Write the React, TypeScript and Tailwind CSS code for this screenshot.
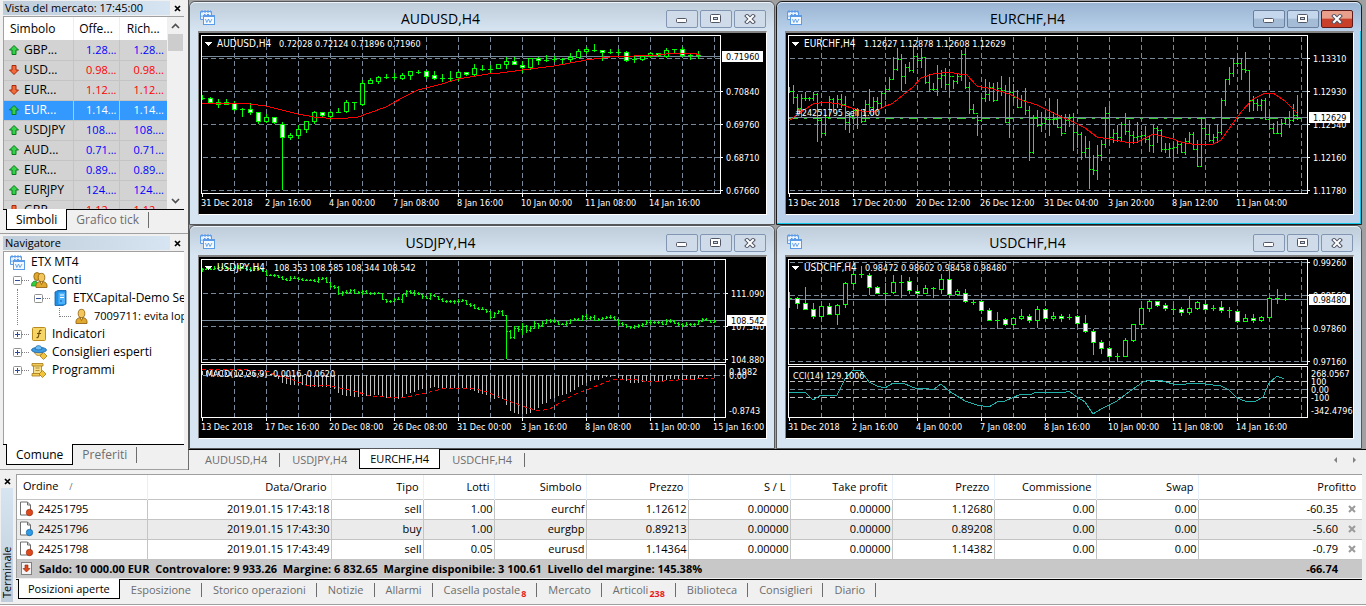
import type { ReactNode } from 'react';

type Candle = [high: number, top: number, bottom: number, low: number, kind: 'f' | 'h' | 'd'];
type Bar = [high: number, low: number, close: number];

const GRID = '#778899';
const LIME = '#00ff00';
const PLOT_BOTTOM = 160;

// candles are [high, body top, body bottom, low, filled / hollow / doji]
const audusd: Candle[] = [
  [95, 98, 99, 100, 'd'], [97, 98, 103, 104, 'f'], [99, 102, 105, 108, 'f'], [99, 102, 105, 105, 'h'],
  [101, 103, 110, 111, 'f'], [108, 109, 110, 117, 'd'], [103, 109, 113, 115, 'f'], [112, 112, 122, 124, 'f'],
  [114, 117, 122, 123, 'h'], [117, 117, 123, 124, 'f'], [122, 124, 138, 190, 'f'], [133, 135, 138, 140, 'h'],
  [125, 129, 136, 139, 'h'], [121, 121, 130, 133, 'h'], [111, 112, 122, 124, 'h'], [112, 112, 116, 118, 'f'],
  [111, 112, 117, 120, 'h'], [108, 112, 113, 113, 'd'], [100, 102, 112, 113, 'h'], [102, 102, 103, 110, 'd'],
  [80, 83, 105, 106, 'h'], [78, 80, 84, 84, 'h'], [76, 77, 82, 84, 'h'], [74, 77, 78, 79, 'd'],
  [73, 77, 78, 80, 'd'], [73, 75, 79, 80, 'h'], [71, 71, 76, 80, 'h'], [70, 72, 73, 74, 'd'],
  [70, 71, 77, 79, 'f'], [71, 75, 79, 80, 'f'], [74, 78, 79, 82, 'd'], [71, 78, 79, 81, 'd'],
  [71, 72, 78, 81, 'h'], [72, 72, 75, 76, 'f'], [64, 68, 75, 76, 'h'], [65, 69, 70, 71, 'd'],
  [65, 69, 70, 73, 'd'], [64, 64, 69, 69, 'h'], [57, 61, 65, 69, 'h'], [57, 61, 65, 65, 'f'],
  [61, 65, 68, 73, 'f'], [58, 58, 68, 70, 'h'], [57, 58, 61, 65, 'f'], [55, 60, 61, 62, 'd'],
  [56, 59, 60, 62, 'd'], [58, 59, 60, 64, 'd'], [53, 57, 60, 62, 'h'], [49, 51, 58, 58, 'h'],
  [47, 49, 52, 54, 'h'], [44, 50, 51, 52, 'd'], [50, 50, 53, 61, 'f'], [49, 52, 53, 54, 'd'],
  [49, 52, 53, 55, 'd'], [51, 52, 61, 62, 'f'], [56, 59, 60, 63, 'd'], [55, 56, 60, 61, 'h'],
  [52, 53, 57, 58, 'h'], [53, 53, 56, 57, 'f'], [48, 50, 57, 58, 'h'], [49, 49, 50, 53, 'd'],
  [47, 49, 56, 57, 'f'], [53, 55, 56, 60, 'd'], [51, 55, 56, 59, 'd'],
];

const usdchf: Candle[] = [
  [35, 41, 42, 51, 'd'], [40, 41, 47, 52, 'f'], [30, 46, 53, 53, 'f'], [46, 52, 60, 62, 'f'],
  [47, 49, 60, 62, 'h'], [46, 49, 58, 58, 'f'], [47, 48, 58, 68, 'h'], [25, 26, 48, 51, 'h'],
  [16, 17, 27, 28, 'h'], [9, 17, 18, 21, 'd'], [16, 18, 31, 38, 'f'], [29, 30, 37, 37, 'f'],
  [26, 36, 37, 44, 'd'], [18, 25, 36, 37, 'h'], [18, 25, 26, 41, 'd'], [20, 24, 34, 37, 'f'],
  [30, 34, 37, 41, 'f'], [28, 31, 37, 37, 'h'], [30, 31, 32, 41, 'd'], [17, 22, 33, 37, 'h'],
  [13, 22, 38, 41, 'f'], [32, 34, 38, 39, 'h'], [32, 36, 45, 46, 'f'], [43, 45, 46, 48, 'd'],
  [42, 44, 54, 54, 'f'], [51, 53, 64, 64, 'f'], [55, 63, 64, 72, 'd'], [61, 62, 68, 69, 'f'],
  [60, 61, 68, 71, 'h'], [52, 59, 62, 63, 'h'], [57, 59, 64, 66, 'f'], [49, 52, 64, 71, 'h'],
  [51, 52, 62, 63, 'f'], [55, 59, 62, 64, 'h'], [57, 59, 62, 65, 'f'], [57, 60, 61, 63, 'd'],
  [58, 59, 67, 70, 'f'], [58, 66, 75, 76, 'f'], [72, 74, 86, 98, 'f'], [83, 85, 92, 97, 'f'],
  [90, 91, 100, 101, 'f'], [96, 99, 100, 105, 'd'], [81, 83, 100, 100, 'h'], [67, 67, 84, 85, 'h'],
  [49, 51, 68, 70, 'h'], [42, 44, 52, 55, 'h'], [44, 44, 49, 50, 'f'], [46, 48, 52, 54, 'f'],
  [47, 52, 53, 58, 'd'], [50, 52, 56, 59, 'f'], [39, 51, 56, 58, 'h'], [44, 45, 52, 53, 'h'],
  [43, 47, 53, 53, 'f'], [48, 51, 52, 54, 'd'], [44, 50, 54, 56, 'f'], [50, 53, 54, 61, 'd'],
  [53, 54, 65, 66, 'f'], [57, 61, 65, 65, 'h'], [57, 61, 64, 66, 'f'], [59, 60, 64, 65, 'h'],
  [40, 41, 61, 63, 'h'], [32, 41, 42, 47, 'd'], [36, 42, 43, 44, 'd'],
];

// bars are [high, low, close], in thirds of a pixel
const eurchf: Bar[] = [
  [262, 280, 272], [255, 312, 290], [283, 345, 325], [283, 350, 295], [277, 303, 294], [290, 302, 293],
  [275, 302, 281], [280, 427, 361], [352, 412, 400], [345, 407, 350], [287, 352, 297], [293, 335, 308],
  [285, 325, 296], [283, 325, 312], [288, 389, 367], [335, 398, 349], [325, 373, 330], [325, 388, 330],
  [327, 370, 364], [300, 367, 313], [267, 343, 320], [290, 345, 303], [291, 335, 308], [277, 325, 279],
  [265, 300, 268], [232, 272, 236], [171, 238, 208], [145, 212, 178], [162, 273, 227], [192, 253, 202],
  [187, 215, 211], [132, 218, 168], [165, 205, 181], [145, 205, 172], [172, 252, 247], [222, 277, 266],
  [250, 273, 268], [195, 288, 235], [210, 265, 226], [205, 270, 253], [217, 290, 228], [240, 268, 244],
  [222, 252, 229], [150, 242, 163], [145, 267, 262], [245, 342, 326], [313, 343, 338], [345, 408, 360],
  [290, 367, 294], [238, 305, 283], [247, 302, 260], [250, 305, 300], [247, 303, 265], [228, 288, 270],
  [255, 370, 367], [230, 415, 275], [252, 308, 290], [270, 325, 320], [285, 325, 300], [265, 345, 330],
  [318, 484, 455], [345, 462, 350], [330, 382, 374], [337, 397, 368], [342, 375, 356], [293, 408, 356],
  [335, 375, 356], [297, 385, 380], [345, 408, 398], [342, 395, 360], [343, 380, 350], [340, 453, 395],
  [372, 443, 402], [397, 480, 456], [408, 475, 445], [422, 567, 507], [465, 525, 510], [435, 540, 466],
  [420, 482, 433], [320, 443, 340], [318, 430, 412], [388, 430, 400], [375, 425, 410], [367, 425, 373],
  [338, 405, 394], [360, 445, 405], [392, 433, 411], [365, 428, 408], [393, 425, 405], [377, 430, 417],
  [407, 457, 436], [375, 460, 385], [377, 430, 390], [387, 457, 447], [430, 460, 448], [430, 472, 445],
  [430, 472, 440], [420, 463, 433], [428, 460, 456], [415, 465, 422], [395, 433, 403], [395, 450, 447],
  [420, 500, 497], [352, 498, 383], [367, 420, 402], [375, 425, 420], [402, 430, 410], [372, 430, 396],
  [293, 405, 301], [237, 318, 238], [202, 255, 218], [178, 230, 188], [172, 202, 190], [175, 240, 206],
  [155, 220, 210], [210, 335, 300], [288, 333, 310], [297, 333, 315], [297, 333, 300], [295, 360, 356],
  [343, 387, 383], [370, 403, 398], [363, 400, 398], [357, 410, 370], [352, 375, 355], [333, 385, 360],
  [312, 367, 345], [285, 360, 353],
];

const usdjpy: Bar[] = [
  [137, 150, 141], [136, 142, 139], [137, 143, 140], [132, 142, 138], [130, 142, 134], [133, 140, 137],
  [133, 142, 138], [134, 143, 139], [132, 142, 136], [128, 142, 137], [133, 142, 138], [135, 145, 140],
  [135, 147, 143], [133, 143, 137], [136, 145, 142], [138, 150, 146], [145, 163, 160], [155, 163, 159],
  [156, 165, 160], [160, 168, 164], [163, 175, 171], [168, 178, 175], [163, 175, 168], [163, 172, 168],
  [165, 175, 170], [168, 178, 174], [170, 178, 175], [170, 178, 174], [172, 180, 177], [165, 183, 170],
  [165, 173, 169], [165, 183, 180], [180, 197, 193], [190, 200, 196], [193, 218, 212], [207, 223, 211],
  [205, 215, 209], [202, 213, 205], [200, 217, 212], [207, 217, 210], [203, 220, 206], [203, 217, 212],
  [210, 220, 214], [210, 220, 214], [210, 217, 214], [212, 233, 231], [230, 242, 238], [235, 243, 236],
  [228, 237, 231], [225, 235, 231], [215, 242, 217], [203, 225, 208], [203, 215, 209], [205, 222, 213],
  [210, 220, 217], [217, 230, 223], [222, 232, 228], [213, 235, 218], [215, 225, 222], [222, 235, 230],
  [228, 240, 236], [235, 243, 238], [233, 243, 237], [235, 245, 238], [232, 242, 236], [230, 240, 234],
  [235, 250, 245], [243, 255, 250], [247, 262, 258], [255, 265, 260], [255, 263, 260], [260, 272, 266],
  [268, 292, 285], [270, 285, 273], [263, 275, 266], [263, 283, 280], [280, 412, 328], [325, 352, 346],
  [313, 350, 318], [312, 330, 322], [303, 340, 312], [310, 332, 323], [313, 330, 318], [297, 320, 302],
  [302, 320, 310], [298, 315, 303], [290, 305, 295], [292, 302, 297], [292, 303, 297], [300, 310, 306],
  [303, 310, 307], [298, 312, 302], [290, 305, 294], [288, 297, 292], [288, 297, 293], [280, 297, 283],
  [275, 295, 287], [283, 293, 286], [280, 298, 293], [287, 295, 291], [285, 292, 287], [282, 290, 286],
  [280, 290, 285], [283, 293, 290], [290, 313, 303], [300, 312, 307], [305, 318, 313], [312, 320, 316],
  [308, 320, 312], [305, 318, 310], [303, 315, 307], [295, 310, 299], [295, 310, 300], [297, 305, 301],
  [297, 307, 301], [297, 310, 305], [290, 305, 297], [292, 302, 298], [293, 307, 303], [300, 312, 307],
  [303, 315, 309], [300, 313, 305], [303, 312, 307], [303, 312, 307], [295, 307, 297], [287, 300, 291],
  [288, 298, 293], [293, 303, 299], [293, 303, 296],
];

const macd = [
  447, 447, 448, 449, 448, 448, 449, 449, 449, 450, 450, 451, 451, 452, 452, 453, 455, 456, 460, 470, 482, 485, 488,
  488, 490, 490, 493, 494, 494, 495, 495, 495, 498, 502, 513, 518, 521, 521, 524, 524, 521, 521, 521, 520, 520, 522,
  527, 528, 531, 531, 529, 517, 513, 510, 503, 501, 503, 498, 496, 497, 499, 499, 501, 499, 499, 498, 500, 503, 507,
  512, 516, 519, 529, 530, 529, 530, 548, 567, 572, 576, 576, 576, 573, 563, 558, 547, 543, 530, 528, 522, 519, 517,
  509, 504, 494, 490, 482, 476, 474, 473, 469, 466, 464, 462, 467, 473, 477, 483, 482, 483, 481, 478, 477, 476, 476,
  476, 473, 472, 472, 474, 475, 474, 474, 474, 470, 466, 463, 463, 462,
];

function Candles({ data, dy = 0 }: { data: Candle[]; dy?: number }) {
  return (
    <g stroke={LIME}>
      {data.map(([high, top, bottom, low, kind], i) => {
        const x = 3.5 + i * 8;
        return (
          <g key={i}>
            <path d={`M${x} ${high + dy}V${low + dy}`} />
            {kind === 'd' ? (
              <path d={`M${i ? x - 2.5 : x} ${top + dy + 0.5}H${x + 2.5}`} />
            ) : (
              <rect x={x - 2} y={top + dy + 0.5} width={4} height={bottom - top - 1} fill={kind === 'f' ? '#fff' : '#000'} />
            )}
          </g>
        );
      })}
    </g>
  );
}

function Bars({ data, dy }: { data: Bar[]; dy: number }) {
  const px = (v: number) => Math.round(v / 3) + dy;
  const d = data.map(([high, low, close], i) => {
    const x = 3.5 + i * 4;
    const open = i ? `M${x - 1.5} ${px(data[i - 1][2]) + 0.5}H${x}` : '';
    return `${open}M${x} ${px(high)}V${px(low)}M${x} ${px(close) + 0.5}H${x + 1.5}`;
  });
  return <path d={d.join('')} stroke={LIME} fill="none" />;
}

type ChartProps = {
  symbol: string;
  values: string;
  valuesX: number;
  right?: number;
  split?: [number, number];
  grid: number[];
  axis: [number, string][];
  price: [number, string];
  subAxis?: [number, string][];
  dates: string[];
  overlay?: ReactNode;
  children: ReactNode;
};

function Chart({ symbol, values, valuesX, right = 521, split, grid, axis, price, subAxis = [], dates, overlay, children }: ChartProps) {
  const columns = Array.from({ length: 16 }, (_, i) => 35.5 + i * 32).filter((x) => x < right);
  return (
    <svg
      className="block h-[181px] w-full bg-black font-['DejaVu_Sans_Condensed','DejaVu_Sans',sans-serif] text-[9px]"
      shapeRendering="crispEdges"
    >
      <g stroke={GRID} strokeDasharray="5 3" fill="none">
        {columns.map((x) => (
          <path key={x} d={`M${x} 4V${PLOT_BOTTOM}`} />
        ))}
        {grid.map((y) => (
          <path key={y} d={`M4 ${y + 0.5}H${right}`} />
        ))}
      </g>
      <path d={`M3 ${price[0] + 0.5}H${right}`} stroke={GRID} />
      {children}
      <g stroke="#fff" fill="none">
        <path d={`M2.5 2.5H${right + 0.5}V${PLOT_BOTTOM + 0.5}H2.5Z`} />
        {split && <path d={`M3 ${split[0] + 0.5}H${right}M3 ${split[1] + 0.5}H${right}`} />}
        {split && <path d={`M2 ${split[0] + 1.5}H${right + 1}`} stroke="#000" />}
        {axis.map(([y]) => (
          <path key={y} d={`M${right} ${y + 0.5}h3`} />
        ))}
        {dates.map((d, i) => (
          <path key={d} d={`M${3.5 + i * 64} ${PLOT_BOTTOM}v4`} />
        ))}
      </g>
      <g fill="#fff">
        {axis.map(([y, label]) => (
          <text key={label} x={right + 6} y={y + 4}>{label}</text>
        ))}
        {subAxis.map(([y, label]) => (
          <text key={label} x={right + 4} y={y + 4}>{label}</text>
        ))}
        {dates.map((d, i) => (
          <text key={d} x={2 + i * 64} y={173}>{d}</text>
        ))}
        <path d="M6 9h7l-3.500 4z" />
        <text x={18} y={14} className="text-[10px]">{symbol}</text>
        <text x={valuesX} y={14}>{values}</text>
        {overlay}
        <rect x={right + 2} y={price[0] - 5} width={41} height={11} />
        <text x={right + 6} y={price[0] + 4} fill="#000">{price[1]}</text>
      </g>
    </svg>
  );
}

function ChartIcon() {
  return (
    <svg width="15" height="15" viewBox="0 0 15 15" fill="none" stroke="#5b9be8">
      <path d="M.500 9.500v-8h11v4h-8v4z" fill="#eaf3fd" />
      <path d="M1 1.500h10" strokeWidth="2" strokeDasharray="2 1" />
      <path d="M2 7V5.500M4 4.500h1.500M7 4.500h2" />
      <rect x="3.500" y="5.500" width="11" height="9" fill="#f5faff" />
      <path d="M4 6.500h10" />
      <path d="M5.500 9l1.300 3.500L8.500 9l1.500 3.500L12 9" strokeWidth=".9" />
    </svg>
  );
}

function WindowButton({ label, danger, active, children }: { label: string; danger?: boolean; active?: boolean; children: ReactNode }) {
  const look = danger
    ? 'border-[#5c1a1a] bg-gradient-to-b from-[#e8a08c] from-45% to-[#c8402a] to-50%'
    : active
      ? 'border-[#6b7f9c] bg-gradient-to-b from-[#c4d7ec] from-45% to-[#a5bcd6] to-50%'
      : 'border-[#8295b2] bg-[#cfdbe8]';
  return (
    <button aria-label={label} className={`flex h-[18px] w-8 items-center justify-center rounded-xs border ${look}`}>
      {children}
    </button>
  );
}

function ChartWindow({ title, active, children }: { title: string; active?: boolean; children: ReactNode }) {
  return (
    <section
      className={`min-w-0 rounded-t-md border pr-[7px] pb-[9px] pl-2 ${
        active
          ? 'border-[#1c1c1c] bg-[#b9d1ea] shadow-[inset_-1px_-1px_0_#12c8e8]'
          : 'border-[#55575b] bg-[#d7e4f2]'
      }`}
    >
      <header
        className={`-mr-[7px] -ml-2 flex h-[29px] items-center gap-0.5 rounded-t-md border-t border-white/60 pr-2 pl-[10px] bg-gradient-to-b ${
          active ? 'from-[#9ab5d3] to-[#b9d1ea]' : 'from-[#bfcddb] to-[#d7e4f2]'
        }`}
      >
        <ChartIcon />
        <h2 className="grow pt-1 text-center text-[14px] leading-5 text-black">{title}</h2>
        <div className="flex gap-0.5 pt-1">
          <WindowButton label="Riduci a icona" active={active}>
            <svg width="12" height="8" viewBox="0 0 12 8">
              <rect x="0.5" y="3.5" width="10" height="4" rx="1" fill="#fff" stroke="#535666" />
            </svg>
          </WindowButton>
          <WindowButton label="Ingrandisci" active={active}>
            <svg width="12" height="10" viewBox="0 0 12 10" stroke="#535666">
              <rect x="0.5" y="0.5" width="10" height="8" rx="1" fill="#fff" />
              <rect x="3.5" y="3.5" width="4" height="2" fill="#cfdbe8" />
            </svg>
          </WindowButton>
          <WindowButton label="Chiudi" danger={active}>
            <svg width="12" height="10" viewBox="0 0 12 10" strokeLinecap="square">
              <path d="M3 2l6 6M9 2l-6 6" stroke="#535666" strokeWidth="4" />
              <path d="M3 2l6 6M9 2l-6 6" stroke="#fff" strokeWidth="2" />
            </svg>
          </WindowButton>
        </div>
      </header>
      <div className="border-l border-t-2 border-r border-b border-[#858585] border-r-white border-b-white">{children}</div>
    </section>
  );
}

const quotes = [
  { symbol: 'GBP...', bid: '1.28...', ask: '1.28...', up: true },
  { symbol: 'USD...', bid: '0.98...', ask: '0.98...', up: false },
  { symbol: 'EUR...', bid: '1.12...', ask: '1.12...', up: false },
  { symbol: 'EUR...', bid: '1.14...', ask: '1.14...', up: true, selected: true },
  { symbol: 'USDJPY', bid: '108....', ask: '108....', up: true },
  { symbol: 'AUD...', bid: '0.71...', ask: '0.71...', up: true },
  { symbol: 'EUR...', bid: '0.89...', ask: '0.89...', up: true },
  { symbol: 'EURJPY', bid: '124....', ask: '124....', up: true },
  { symbol: 'GBP...', bid: '1.12...', ask: '1.12...', up: false },
];

function Arrow({ up }: { up: boolean }) {
  return (
    <svg width="12" height="12" viewBox="0 0 12 12" className="shrink-0">
      {up ? (
        <path d="M6 1.500l4.500 4.500H8v4.500H4V6H1.500z" fill="#35d04a" stroke="#0a7a1c" />
      ) : (
        <path d="M6 10.500L1.500 6H4V1.500h4V6h2.500z" fill="#f06a3a" stroke="#a8280a" />
      )}
    </svg>
  );
}

function PanelTitle({ children }: { children: ReactNode }) {
  return (
    <div className="flex h-4 items-center">
      <h2 className="grow bg-gradient-to-r from-[#bfcddb] to-[#d7e4f2] pl-0.5 text-[11px] leading-[14px]">{children}</h2>
      <button aria-label="Chiudi" className="flex w-[14px] justify-center">
        <CloseMark />
      </button>
    </div>
  );
}

function CloseMark() {
  return (
    <svg width="7" height="7" viewBox="0 0 7 7">
      <path d="M1 1l5 5M6 1l-5 5" stroke="#000" strokeWidth="1.700" />
    </svg>
  );
}

function PanelTabs({ active, other }: { active: string; other: string }) {
  return (
    <div className="flex h-[22px] items-start border-t border-black pl-[3px] text-[12px]">
      <button className="-mt-px h-[21px] border border-t-0 border-black bg-white px-[9px] leading-[19px]">{active}</button>
      <button className="mt-0.5 h-[16px] border-r border-[#6d6d6d] px-[9px] leading-[14px] text-[#6d6d6d]">{other}</button>
    </div>
  );
}

function MarketWatch() {
  return (
    <section className="h-[234px] border-b border-[#a0a0a0] pr-[4px] pl-[3px]">
      <PanelTitle>Vista del mercato: 17:45:00</PanelTitle>
      <div className="border-t border-l border-[#a0a0a0] bg-white">
        <div className="flex h-[192px] overflow-hidden">
          <table className="h-[203px] w-[163px] table-fixed border-collapse">
            <colgroup>
              <col className="w-[69px]" />
              <col className="w-[46px]" />
              <col />
            </colgroup>
            <thead>
              <tr className="h-[23px] text-left text-[12px]">
                <th className="border-r border-[#e5f0fb] px-1.5 font-normal">Simbolo</th>
                <th className="border-r border-[#e5f0fb] px-0 text-center font-normal">Offe...</th>
                <th className="px-0 text-center font-normal">Rich...</th>
              </tr>
            </thead>
            <tbody>
              {quotes.map((q, i) => (
                <tr
                  key={i}
                  className={`h-5 ${
                    q.selected ? 'bg-[#3399ff] text-white' : q.up ? 'bg-[#d3d3d3] text-[#0000ff]' : 'bg-[#d3d3d3] text-[#ff0000]'
                  }`}
                >
                  <td className={`border-r border-b border-[#c4c4c4] text-[12px] ${q.selected ? '' : 'text-black'}`}>
                    <span className="flex items-center gap-1 pl-1">
                      <Arrow up={q.up} />
                      {q.symbol}
                    </span>
                  </td>
                  <td className="border-r border-b border-[#c4c4c4] pr-0.5 text-right">{q.bid}</td>
                  <td className="border-b border-[#c4c4c4] pr-[3px] text-right">{q.ask}</td>
                </tr>
              ))}
            </tbody>
          </table>
          <div className="flex grow flex-col items-center bg-[#f0f0f0]">
            <button aria-label="Su" className="flex h-[17px] w-full items-center justify-center">
              <svg width="9" height="6" viewBox="0 0 9 6"><path d="M1 5l3.500-3.500L8 5" fill="none" stroke="#505050" strokeWidth="1.700" /></svg>
            </button>
            <div className="h-[17px] w-[15px] bg-[#cdcdcd]" />
            <button aria-label="Giù" className="mt-auto flex h-[17px] w-full items-center justify-center">
              <svg width="9" height="6" viewBox="0 0 9 6"><path d="M1 1l3.500 3.500L8 1" fill="none" stroke="#505050" strokeWidth="1.700" /></svg>
            </button>
          </div>
        </div>
      </div>
      <PanelTabs active="Simboli" other="Grafico tick" />
    </section>
  );
}

function Toggle({ open }: { open?: boolean }) {
  return (
    <svg width="9" height="9" viewBox="0 0 9 9" className="shrink-0">
      <rect x="0.5" y="0.5" width="8" height="8" rx="1" fill="#fff" stroke="#919191" />
      <path d={open ? 'M2 4.500h5' : 'M2 4.500h5M4.500 2v5'} stroke="#2b4b9b" />
    </svg>
  );
}

function PersonIcon({ small }: { small?: boolean }) {
  return (
    <svg width={small ? 13 : 17} height="16" viewBox={small ? '4 0 13 16' : '0 0 17 16'} stroke="#8a5c0c" strokeWidth=".8">
      {!small && (
        <>
          <path d="M.5 14c0-3 1-5 4.500-5l3 5z" fill="#2fce3c" stroke="#1d8a2a" />
          <ellipse cx="6" cy="4.500" rx="3.200" ry="4" fill="#e0a82c" />
        </>
      )}
      <path d="M5 15.500c-.5-4 1.500-6 5.500-6s6 2 5.500 6z" fill="#e0a82c" />
      <path d="M9 9.500l1.500 3 1.500-3" fill="#fff6c8" />
      <ellipse cx="10.500" cy="5.500" rx="3.300" ry="4.200" fill="#f2c65a" />
    </svg>
  );
}

function ServerIcon() {
  return (
    <svg width="13" height="16" viewBox="0 0 13 16">
      <path d="M1 2l3-1.500h8V14l-3 1.500H1z" fill="#1f8fe6" stroke="#0b5ca8" strokeWidth=".8" />
      <path d="M4.500 2.500h6.500v11.500H4.500z" fill="#4db2fa" />
      <path d="M6 5h4M6 7.500h4" stroke="#fff" strokeWidth="1.200" />
      <path d="M6 11h2" stroke="#0b5ca8" />
    </svg>
  );
}

function FunctionIcon() {
  return (
    <svg width="15" height="15" viewBox="0 0 15 15">
      <rect x="0.5" y="0.5" width="13" height="13" rx="1" fill="#f5d565" stroke="#b98a1c" />
      <path d="M9.500 3.500c-2-.8-2.300 1-2.600 3.500-.3 2.500-.6 4-2.400 3.500M5 6.500h4" fill="none" stroke="#6e4a08" strokeWidth="1.100" />
    </svg>
  );
}

function ExpertIcon() {
  return (
    <svg width="17" height="15" viewBox="0 0 17 15" strokeWidth=".8">
      <path d="M3 6c1 6 8 6 9 0z" fill="#f3d37a" stroke="#a3781c" />
      <ellipse cx="8" cy="5" rx="7.500" ry="2.700" fill="#3f9be0" stroke="#1a64a8" />
      <path d="M4 4c0-4.500 7-4.500 7 0-2 1.200-5 1.200-7 0z" fill="#6dbcf2" stroke="#1a64a8" />
      <path d="M12.500 7.500l3.500 3.500-3.500 3.500L9 11z" fill="#f2c53d" stroke="#a3781c" />
    </svg>
  );
}

function ScriptIcon() {
  return (
    <svg width="16" height="15" viewBox="0 0 16 15" stroke="#a3781c" strokeWidth=".8">
      <path d="M2.500 1.500h8V12h-8z" fill="#f7df8a" />
      <path d="M1 .500h11v2.500H1zM1 10.500h8V13H1z" fill="#f0cb55" />
      <path d="M4.500 5h4M4.500 7.500h4" />
      <path d="M11.500 7.500L15 11l-3.500 3.500L8 11z" fill="#f2c53d" />
    </svg>
  );
}

const Dots = () => <span className="w-[7px] shrink-0 border-b border-dotted border-[#808080]" />;

function TreeIcon({ children }: { children: ReactNode }) {
  return <span className="mr-[3px] flex w-5 shrink-0 justify-center">{children}</span>;
}

function Navigator() {
  const folders = [
    { label: 'Indicatori', icon: <FunctionIcon /> },
    { label: 'Consiglieri esperti', icon: <ExpertIcon /> },
    { label: 'Programmi', icon: <ScriptIcon /> },
  ];
  return (
    <section className="flex grow flex-col border-b border-[#a0a0a0] pt-px pr-[4px] pb-[3px] pl-[3px]">
      <PanelTitle>Navigatore</PanelTitle>
      <ul className="grow overflow-hidden border-t border-l border-[#a0a0a0] bg-white pt-px text-[12px] whitespace-nowrap">
        <li className="flex h-[18px] items-center gap-1.5 pl-1.5"><ChartIcon />ETX MT4</li>
        <li className="flex h-[18px] items-center pl-[9px]">
          <Toggle open /><Dots />
          <TreeIcon><PersonIcon /></TreeIcon>Conti
        </li>
        <li className="flex h-[18px] items-center">
          <span className="ml-[13px] h-full w-[17px] shrink-0 border-l border-dotted border-[#808080]" />
          <Toggle open /><Dots />
          <TreeIcon><ServerIcon /></TreeIcon>ETXCapital-Demo Se
        </li>
        <li className="flex h-[18px] items-center">
          <span className="ml-[13px] h-full w-[42px] shrink-0 border-l border-dotted border-[#808080]" />
          <span className="mb-2 h-[9px] w-3 shrink-0 border-b border-l border-dotted border-[#808080]" />
          <TreeIcon><PersonIcon small /></TreeIcon>
          <span className="text-[11px]">7009711: evita lopez</span>
        </li>
        {folders.map((f) => (
          <li key={f.label} className="flex h-[18px] items-center pl-[9px]">
            <Toggle /><Dots />
            <TreeIcon>{f.icon}</TreeIcon>{f.label}
          </li>
        ))}
      </ul>
      <PanelTabs active="Comune" other="Preferiti" />
    </section>
  );
}

const orders = [
  ['24251795', '2019.01.15 17:43:18', 'sell', '1.00', 'eurchf', '1.12612', '0.00000', '0.00000', '1.12680', '0.00', '0.00', '-60.35'],
  ['24251796', '2019.01.15 17:43:30', 'buy', '1.00', 'eurgbp', '0.89213', '0.00000', '0.00000', '0.89208', '0.00', '0.00', '-5.60'],
  ['24251798', '2019.01.15 17:43:49', 'sell', '0.05', 'eurusd', '1.14364', '0.00000', '0.00000', '1.14382', '0.00', '0.00', '-0.79'],
];

const columns = ['Data/Orario', 'Tipo', 'Lotti', 'Simbolo', 'Prezzo', 'S / L', 'Take profit', 'Prezzo', 'Commissione', 'Swap'];

const terminalTabs = [
  { label: 'Esposizione' },
  { label: 'Storico operazioni' },
  { label: 'Notizie' },
  { label: 'Allarmi' },
  { label: 'Casella postale', count: '8' },
  { label: 'Mercato' },
  { label: 'Articoli', count: '238' },
  { label: 'Biblioteca' },
  { label: 'Consiglieri' },
  { label: 'Diario' },
];

function OrderIcon({ sell }: { sell: boolean }) {
  return (
    <svg width="15" height="16" viewBox="0 0 15 16">
      <path d="M1.500 1h7l3 3v10h-10z" fill="#fff" stroke="#6d6d6d" />
      <path d="M8.500 1v3h3" fill="none" stroke="#6d6d6d" />
      <circle cx="10.500" cy="11.500" r="3.200" fill={sell ? '#e0481c' : '#2d9be6'} stroke={sell ? '#9a2a08' : '#0f62a8'} strokeWidth=".7" />
    </svg>
  );
}

function Terminal() {
  return (
    <section className="flex border-b border-[#a0a0a0] pt-1 pb-0.5">
      <div className="flex w-4 shrink-0 flex-col pl-px">
        <button aria-label="Chiudi" className="flex h-[14px] w-3 items-center justify-center"><CloseMark /></button>
        <h2 className="flex w-3 grow rotate-180 items-center bg-gradient-to-b from-[#bfcddb] to-[#d7e4f2] pt-1 text-[11px] leading-3 [writing-mode:vertical-rl]">
          Terminale
        </h2>
      </div>
      <div className="mr-1 min-w-0 grow">
        <div className="border-t border-l border-[#a0a0a0] bg-white">
          <table className="w-full table-fixed border-collapse text-right whitespace-nowrap">
            <colgroup>
              <col className="w-[130px]" />
              <col className="w-[184px]" />
              <col className="w-[92px]" />
              <col className="w-[71px]" />
              <col className="w-[92px]" />
              <col className="w-[102px]" />
              <col className="w-[102px]" />
              <col className="w-[102px]" />
              <col className="w-[102px]" />
              <col className="w-[102px]" />
              <col className="w-[102px]" />
              <col />
            </colgroup>
            <thead>
              <tr className="h-6 border-b border-[#c4c4c4]">
                <th className="border-r border-[#e5f0fb] px-1.5 text-left font-normal">
                  Ordine <span className="pl-2 text-[9px] text-[#6d6d6d]">/</span>
                </th>
                {columns.map((c, i) => (
                  <th key={i} className="border-r border-[#e5f0fb] pr-1 font-normal">{c}</th>
                ))}
                <th className="pr-1.5 font-normal">Profitto</th>
              </tr>
            </thead>
            <tbody>
              {orders.map((row, i) => (
                <tr key={row[0]} className={`h-5 border-b border-[#c4c4c4] ${i === 1 ? 'bg-[#ebebeb]' : 'bg-white'}`}>
                  <td className="border-r border-[#c4c4c4]">
                    <span className="flex items-center gap-1 pl-0.5"><OrderIcon sell={row[2] === 'sell'} />{row[0]}</span>
                  </td>
                  {row.slice(1, 11).map((cell, j) => (
                    <td key={j} className="border-r border-[#c4c4c4] pr-px">{cell}</td>
                  ))}
                  <td>
                    <span className="flex items-center justify-end gap-2.5 pr-1.5">
                      {row[11]}
                      <button aria-label={`Chiudi ordine ${row[0]}`}>
                        <svg width="8" height="8" viewBox="0 0 8 8">
                          <path d="M1 1l6 6M7 1l-6 6" stroke="#9a9a9a" strokeWidth="2" />
                        </svg>
                      </button>
                    </span>
                  </td>
                </tr>
              ))}
              <tr className="h-[19px] bg-[#c8c8c8] font-bold">
                <td colSpan={11}>
                  <span className="flex items-center gap-[7px] pl-1 whitespace-pre">
                    <svg width="11" height="13" viewBox="0 0 11 13">
                      <rect x="0.5" y="0.5" width="10" height="12" fill="#f4f4f4" stroke="#808080" />
                      <path d="M5.500 10L2 6.500h2V3h3v3.500h2z" fill="#e0481c" stroke="#8a2408" strokeWidth=".6" />
                    </svg>
                    {'Saldo: 10 000.00 EUR  Controvalore: 9 933.26  Margine: 6 832.65  Margine disponibile: 3 100.61  Livello del margine: 145.38%'}
                  </span>
                </td>
                <td className="pr-6">-66.74</td>
              </tr>
            </tbody>
          </table>
        </div>
        <div className="mt-px flex h-[23px] items-start gap-px border-t border-black pl-0.5">
          <button className="-mt-px h-5 border border-t-0 border-black bg-white px-[9px] leading-[18px]">Posizioni aperte</button>
          {terminalTabs.map((tab) => (
            <button key={tab.label} className="mt-[3px] flex h-[14px] items-center border-r border-[#6d6d6d] px-2.5 text-[#6d6d6d]">
              {tab.label}
              {tab.count && <span className="pt-2 pl-px text-[9px] font-bold text-[#e81c1c]">{tab.count}</span>}
            </button>
          ))}
        </div>
      </div>
    </section>
  );
}

const datesA = ['31 Dec 2018', '2 Jan 16:00', '4 Jan 00:00', '7 Jan 08:00', '8 Jan 16:00', '10 Jan 00:00', '11 Jan 08:00', '14 Jan 16:00'];

function Charts() {
  return (
    <div className="grid grid-cols-2 gap-x-px border-l border-[#55575b] bg-[#a0a0a0] pt-px pr-1">
      <ChartWindow title="AUDUSD,H4">
        <Chart
          symbol="AUDUSD,H4"
          values="0.72028 0.72124 0.71896 0.71960"
          valuesX={80}
          grid={[25, 58, 91, 124, 157]}
          axis={[[58, '0.70840'], [91, '0.69760'], [124, '0.68710'], [157, '0.67660']]}
          price={[23, '0.71960']}
          dates={datesA}
        >
          <Candles data={audusd} dy={-33} />
          <polyline
            fill="none"
            stroke="#ff0000"
            points="3,70 35,70 51,71 67,73 83,77 99,81 115,84 139,86 159,84 187,74 203,65 219,57 243,51 259,46 289,41 301,40 323,37 355,33 387,27 411,24 459,22 475,20 494,20 501,22"
          />
        </Chart>
      </ChartWindow>
      <ChartWindow title="EURCHF,H4" active>
        <Chart
          symbol="EURCHF,H4"
          values="1.12627 1.12878 1.12608 1.12629"
          valuesX={78}
          grid={[25, 58, 91, 124, 157]}
          axis={[[25, '1.13310'], [58, '1.12930'], [91, '1.12540'], [124, '1.12160'], [157, '1.11780']]}
          price={[84, '1.12629']}
          dates={['13 Dec 2018', '17 Dec 20:00', '20 Dec 12:00', '26 Dec 12:00', '31 Dec 04:00', '3 Jan 20:00', '8 Jan 12:00', '11 Jan 04:00']}
          overlay={<text x={9} y={83}>#24251795 sell 1.00</text>}
        >
          <path d="M3 85.500H521" stroke="#32cd32" strokeDasharray="9 6 3 6" />
          <Bars data={eurchf} dy={-33} />
          <polyline
            fill="none"
            stroke="#ff0000"
            points="3,88 15,79 27,71 39,69 53,71 75,78 87,79 107,70 127,54 135,45 147,41 163,39 173,41 180,41 191,53 207,56 223,61 235,67 251,72 271,82 283,87 299,95 311,104 323,106 339,109 351,109 367,101 387,106 395,109 411,112 427,111 435,107 455,79 467,66 479,60 487,60 499,68 511,80"
          />
        </Chart>
      </ChartWindow>
      <ChartWindow title="USDJPY,H4">
        <Chart
          symbol="USDJPY,H4"
          values="108.353 108.585 108.344 108.542"
          valuesX={75}
          right={526}
          split={[105, 107]}
          grid={[36, 69, 102, 118]}
          axis={[[36, '111.090'], [69, '107.540'], [102, '104.880']]}
          subAxis={[[114, '0.1982'], [118, '0.00'], [153, '-0.8743']]}
          price={[63, '108.542']}
          dates={['13 Dec 2018', '17 Dec 16:00', '20 Dec 08:00', '26 Dec 08:00', '31 Dec 00:00', '3 Jan 16:00', '8 Jan 08:00', '11 Jan 00:00', '15 Jan 16:00']}
          overlay={<text x={7} y={120}>MACD(12,26,9) -0.0016 -0.0620</text>}
        >
          <Bars data={usdjpy} dy={-35} />
          <path d={macd.map((v, i) => `M${3.5 + i * 4} 118V${Math.round(v / 3) - 35}`).join('')} stroke="#c0c0c0" />
          <polyline
            fill="none"
            stroke="#ff0000"
            strokeDasharray="4 3"
            points="3,113 35,112 67,114 75,117 91,122 107,128 131,129 155,134 171,139 203,141 227,136 243,132 259,131 275,131 291,136 307,143 323,149 339,154 351,152 374,138 395,130 415,122 431,122 451,125 479,123 515,121"
          />
        </Chart>
      </ChartWindow>
      <ChartWindow title="USDCHF,H4">
        <Chart
          symbol="USDCHF,H4"
          values="0.98472 0.98602 0.98458 0.98480"
          valuesX={79}
          split={[107, 109]}
          grid={[5, 38, 71, 104, 132]}
          axis={[[5, '0.99260'], [38, '0.98560'], [71, '0.97860'], [104, '0.97160']]}
          subAxis={[[116, '268.0567'], [124, '100'], [132, '0.00'], [140, '-100'], [153, '-342.4796']]}
          price={[42, '0.98480']}
          dates={datesA}
          overlay={<text x={7} y={122}>CCI(14) 129.1006</text>}
        >
          <path d="M4 124.500H521M4 140.500H521" stroke="#c0c0c0" strokeDasharray="5 3" />
          <Candles data={usdchf} />
          <polyline
            fill="none"
            stroke="#20b2aa"
            points="3,135 19,135 27,143 35,138 45,139 51,138 59,122 67,113 75,114 83,125 91,129 99,131 107,126 119,127 131,132 139,131 147,133 155,127 163,134 179,144 191,148 203,150 211,145 219,144 235,137 243,138 251,135 259,136 271,135 277,136 283,134 291,140 299,145 307,157 315,152 331,144 347,132 357,125 363,123 373,123 387,127 400,127 413,126 427,128 435,129 443,133 451,141 459,144 470,144 477,140 483,126 491,119 498,122"
          />
        </Chart>
      </ChartWindow>
    </div>
  );
}

function ChartTabs() {
  const tab = 'mt-[3px] h-[14px] px-3 leading-3 text-[#6d6d6d]';
  return (
    <nav className="flex h-[21px] grow items-start border-t border-l border-black border-l-[#6d6d6d] pl-1">
      <button className={`${tab} border-r border-[#6d6d6d]`}>AUDUSD,H4</button>
      <button className={tab}>USDJPY,H4</button>
      <button className="-mt-px h-5 border border-t-0 border-black bg-white px-2.5 leading-[18px]">EURCHF,H4</button>
      <button className={`${tab} border-r border-[#6d6d6d]`}>USDCHF,H4</button>
      <div className="mt-1.5 mr-2 ml-auto flex gap-3">
        <button aria-label="Precedente"><svg width="7" height="8" viewBox="0 0 7 8"><path d="M5 1v6L2 4z" fill="#808080" /></svg></button>
        <button aria-label="Successivo"><svg width="7" height="8" viewBox="0 0 7 8"><path d="M2 1v6l3-3z" fill="#808080" /></svg></button>
      </div>
    </nav>
  );
}

export default function App() {
  return (
    <main className="flex flex-col bg-[#f0f0f0] font-['Open_Sans','Noto_Sans',sans-serif] text-[11px] leading-4 text-black">
      <div className="flex">
        <aside className="flex w-[188px] shrink-0 flex-col">
          <MarketWatch />
          <Navigator />
        </aside>
        <div className="flex min-w-0 grow flex-col">
          <Charts />
          <ChartTabs />
        </div>
      </div>
      <Terminal />
    </main>
  );
}
